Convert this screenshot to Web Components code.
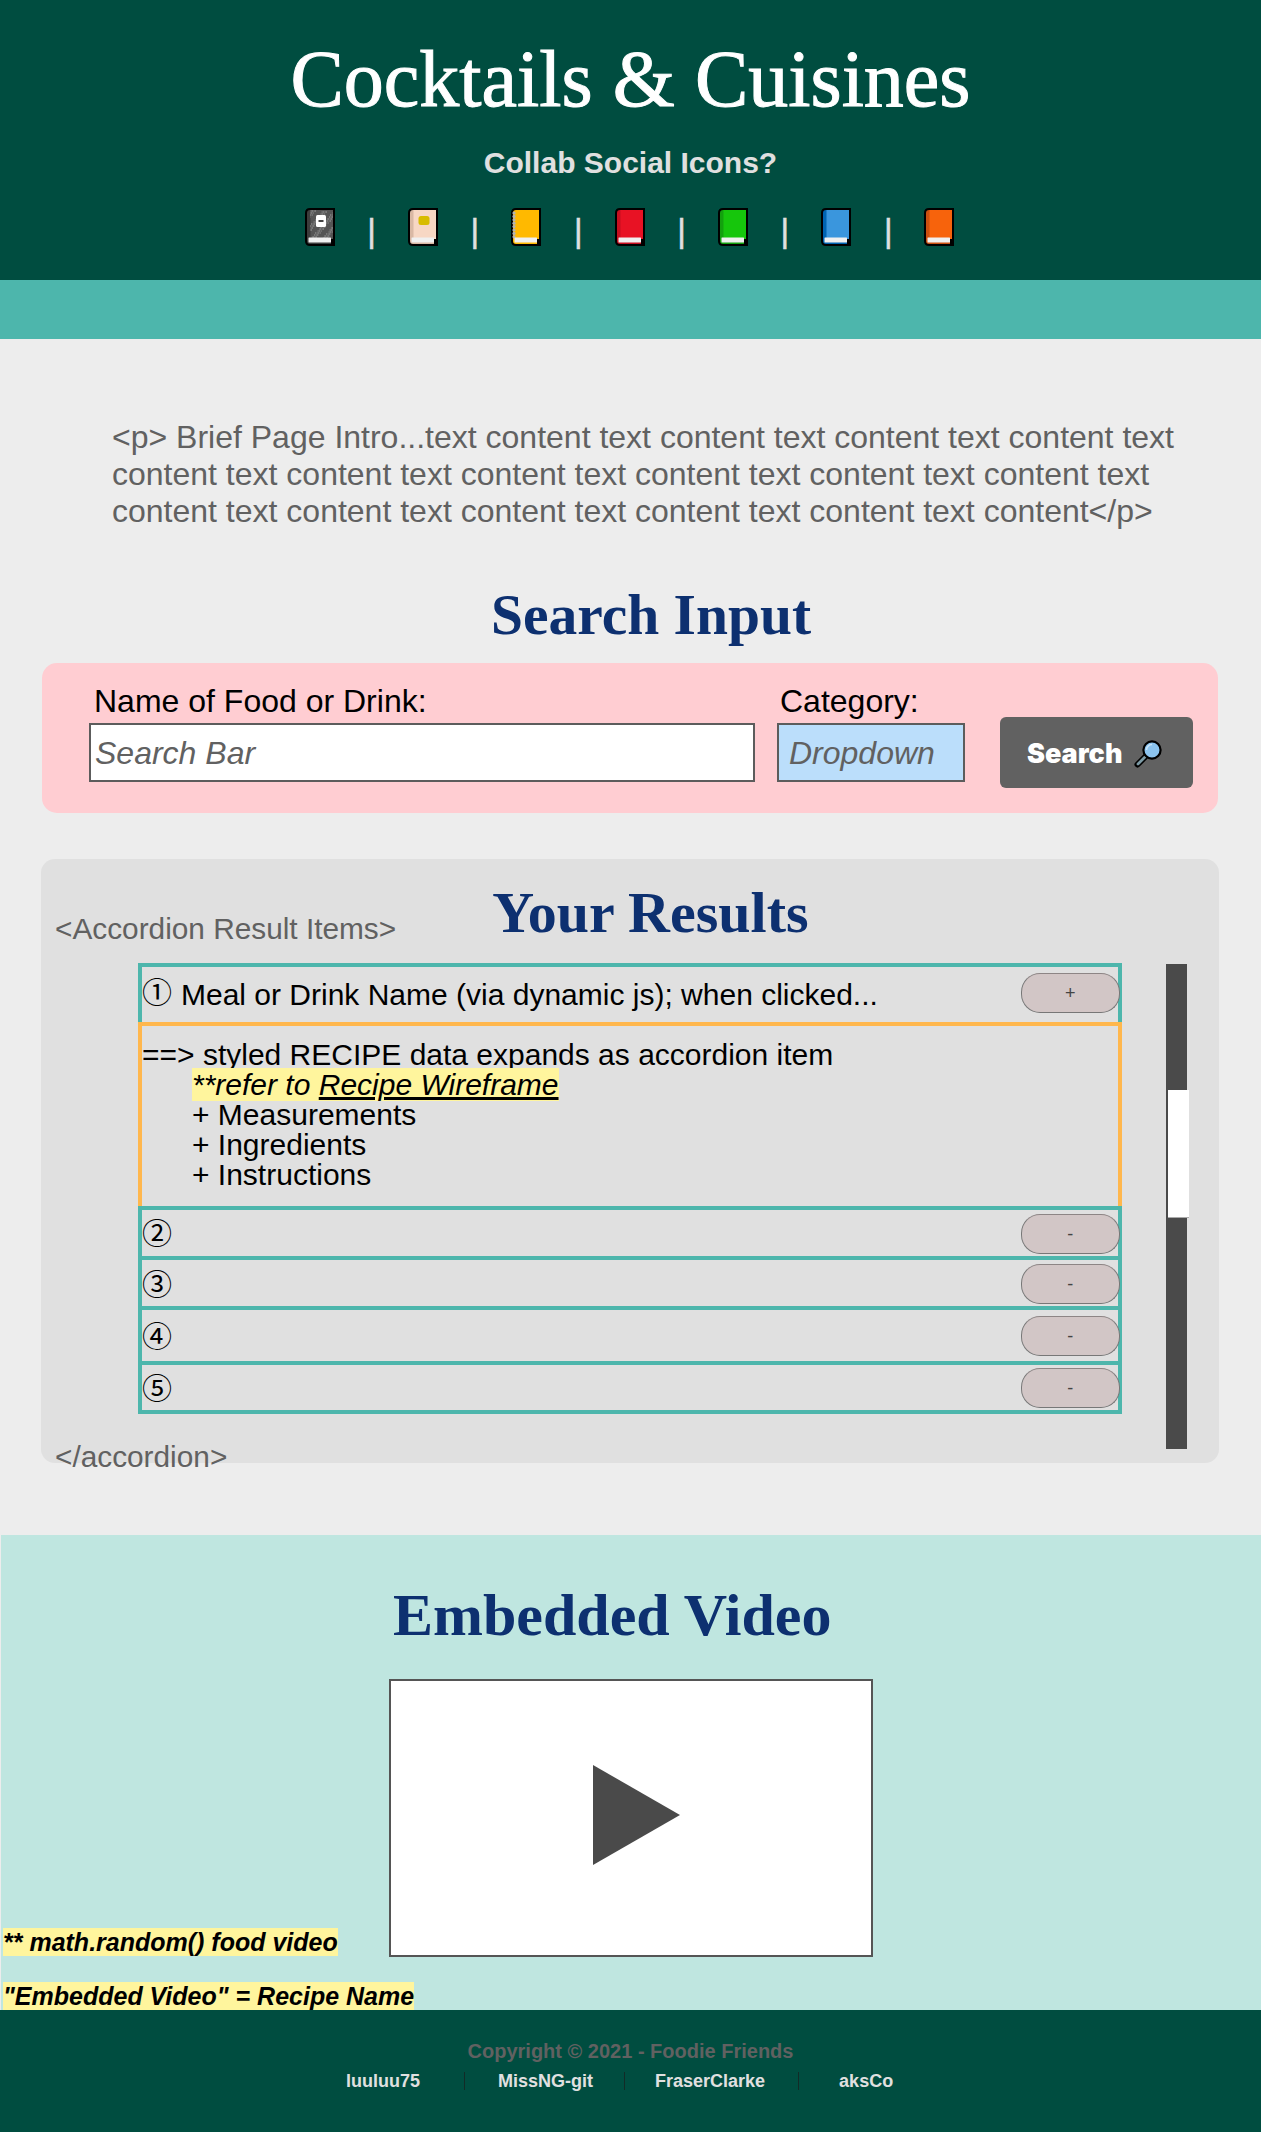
<!DOCTYPE html>
<html lang="en">
<head>
<meta charset="utf-8">
<title>Cocktails &amp; Cuisines</title>
<style>
    html, body { margin: 0; padding: 0; background: #ededed; }
    body { font-family: "Liberation Sans", Arial, sans-serif; }
</style>
</head>
<body>
<site-header></site-header>
<page-intro>&lt;p&gt; Brief Page Intro...text content text content text content text content text content text content text content text content text content text content text content text content text content text content text content text content&lt;/p&gt;</page-intro>
<section-title style="--left:491px;--top:50px">Search Input</section-title>
<search-panel></search-panel>
<results-panel>
    <accordion-row num="①" label="Meal or Drink Name (via dynamic js); when clicked..." sign="+" first open style="--row:55px;--pad:6px;--num:0px"></accordion-row>
    <recipe-detail></recipe-detail>
    <accordion-row num="②" sign="-" first style="--row:46px;--pad:4px;--num:-2px"></accordion-row>
    <accordion-row num="③" sign="-" style="--row:46px;--pad:4px;--num:-1px"></accordion-row>
    <accordion-row num="④" sign="-" style="--row:51px;--pad:6px;--num:1px"></accordion-row>
    <accordion-row num="⑤" sign="-" style="--row:45px;--pad:3px;--num:-2px"></accordion-row>
</results-panel>
<video-section></video-section>
<site-footer></site-footer>

<script>
// emoji style books, drawn by hand
const books = [
    { cover: '#555555', spine: '#3c3c3c', kind: 'speckle' },
    { cover: '#f7d7c4', spine: '#d9b8a4', kind: 'tag' },
    { cover: '#ffb900', spine: '#ffb900', kind: 'spiral' },
    { cover: '#e81224', spine: '#c50f1f' },
    { cover: '#16c60c', spine: '#13a10e' },
    { cover: '#3a96dd', spine: '#0063b1' },
    { cover: '#f7630c', spine: '#ca5010' }
];

class BookIcon extends HTMLElement {
    connectedCallback() {
        const book = books[Number(this.getAttribute('index'))];
        let extra = '';

        if (book.kind === 'speckle') {
            // pale dots on the cover
            for (let i = 0; i < 150; i++) {
                const x = 5 + (i * 37) % 23;
                const y = 2.5 + (i * 53) % 28;
                extra += `<rect x="${x}" y="${y}" width="1" height="1" fill="#a8a8a8" opacity="${0.35 + (i % 3) * 0.25}"/>`;
            }
            extra += '<rect x="11" y="7" width="10" height="12" rx="1.5" fill="#fff"/><rect x="13.5" y="12" width="5" height="2" fill="#444"/>';
        }
        if (book.kind === 'tag') {
            extra = '<rect x="10.5" y="8" width="11" height="9" rx="2.5" fill="#d8bc00"/>';
        }
        if (book.kind === 'spiral') {
            for (let y = 5; y < 30; y += 3.4) {
                extra += `<circle cx="3" cy="${y}" r="1.6" fill="#b4b4b4"/>`;
            }
        }

        const shadow = this.attachShadow({ mode: 'open' });
        shadow.innerHTML = /* html */ `
        <style>
            :host { display: block; width: 30px; height: 38px; flex: none; }
            svg { display: block; }
        </style>
        <svg width="30" height="38" viewBox="0 0 30 38">
            <path d="M5 0H30V38H5Q0 38 0 33V5Q0 0 5 0Z" fill="#000"/>
            <path d="M5 2H28V31H26V36H5Q2 36 2 33V5Q2 2 5 2Z" fill="${book.spine}"/>
            <path d="M5.5 2H28V31H5.5Z" fill="${book.cover}"/>
            ${extra}
            <rect x="3.5" y="29.5" width="22.5" height="5" rx="0.5" fill="#f0f0f0"/>
        </svg>
        `;
    }
}
customElements.define('book-icon', BookIcon);

class SiteHeader extends HTMLElement {
    constructor() {
        super();
        const shadow = this.attachShadow({ mode: 'open' });
        shadow.innerHTML = /* html */ `
        <style>
            :host { display: block; }
            .top {
                background: #004d40;
                padding: 39px 0 34px;
                text-align: center;
            }
            h1 {
                margin: 0;
                font: 400 80px/80px "Liberation Serif", "Times New Roman", serif;
                color: #fff;
                -webkit-text-stroke: 1px #fff;
            }
            p {
                margin: 27px 0 0;
                font: 700 30px/34px "Liberation Sans", Arial, sans-serif;
                color: #e0e0e0;
            }
            .icons {
                display: flex;
                justify-content: center;
                margin: 28px 2px 0 0;
                height: 38px;
            }
            .sep {
                width: 4px;
                margin: 0 34.33px 0 35px;
                display: flex;
                justify-content: center;
                font: 400 33px/46px "Liberation Sans", Arial, sans-serif;
                color: #e0e0e0;
                -webkit-text-stroke: 0.5px #e0e0e0;
            }
            .band { height: 59px; background: #4db6ac; }
        </style>
        <div class="top">
            <h1>Cocktails &amp; Cuisines</h1>
            <p>Collab Social Icons?</p>
            <div class="icons"></div>
        </div>
        <div class="band"></div>
        `;

        const icons = shadow.querySelector('.icons');
        books.forEach((book, i) => {
            const icon = document.createElement('book-icon');
            icon.setAttribute('index', i);
            icons.appendChild(icon);
            if (i < books.length - 1) {
                const sep = document.createElement('span');
                sep.classList.add('sep');
                sep.textContent = '|';
                icons.appendChild(sep);
            }
        });
    }
}
customElements.define('site-header', SiteHeader);

class PageIntro extends HTMLElement {
    constructor() {
        super();
        const shadow = this.attachShadow({ mode: 'open' });
        shadow.innerHTML = /* html */ `
        <style>
            :host {
                display: block;
                margin: 80px 0 0 112px;
                width: 1090px;
                font: 400 32px/37px "Liberation Sans", Arial, sans-serif;
                color: #616161;
            }
        </style>
        <slot></slot>
        `;
    }
}
customElements.define('page-intro', PageIntro);

class SectionTitle extends HTMLElement {
    constructor() {
        super();
        const shadow = this.attachShadow({ mode: 'open' });
        shadow.innerHTML = /* html */ `
        <style>
            :host {
                display: block;
                margin: var(--top, 0) 0 0 var(--left, 0);
                font: 700 var(--size, 57.5px)/70px "Liberation Serif", "Times New Roman", serif;
                color: #0d3070;
                white-space: nowrap;
            }
        </style>
        <slot></slot>
        `;
    }
}
customElements.define('section-title', SectionTitle);

class SearchPanel extends HTMLElement {
    constructor() {
        super();
        const shadow = this.attachShadow({ mode: 'open' });
        shadow.innerHTML = /* html */ `
        <style>
            :host {
                display: flex;
                align-items: flex-start;
                box-sizing: border-box;
                width: 1176px;
                height: 150px;
                margin: 13px 0 0 42px;
                padding: 20px 0 0 47px;
                background: #ffcdd2;
                border-radius: 15px;
                font: 400 32px/37px "Liberation Sans", Arial, sans-serif;
                color: #000;
            }
            .label { padding-left: 5px; white-space: nowrap; }
            .cat { padding-left: 3px; }
            .field {
                box-sizing: border-box;
                height: 59px;
                margin-top: 3px;
                border: 2.5px solid #5c5c5c;
                font-style: italic;
                color: #616161;
                line-height: 57px;
                padding-left: 4px;
            }
            .name .field { width: 666px; background: #fff; }
            .category { margin-left: 22px; }
            .category .field { width: 188px; background: #bbdefb; padding-left: 10px; }
            button {
                display: flex;
                align-items: center;
                box-sizing: border-box;
                width: 193px;
                height: 71px;
                margin: 34px 0 0 35px;
                padding: 2px 0 0 27px;
                border: 0;
                border-radius: 6px;
                background: #616161;
                color: #fff;
                font: 900 27px/28px Inter, "Liberation Sans", sans-serif;
            }
            svg { margin-left: 12px; display: block; }
        </style>
        <div class="name">
            <div class="label">Name of Food or Drink:</div>
            <div class="field">Search Bar</div>
        </div>
        <div class="category">
            <div class="label cat">Category:</div>
            <div class="field">Dropdown</div>
        </div>
        <button>Search
            <svg width="28" height="28" viewBox="0 0 28 28">
                <path d="M12 16L3.5 24.5" stroke="#000" stroke-width="6" stroke-linecap="round"/>
                <path d="M11 17L4 24" stroke="#7c9aa5" stroke-width="2.8" stroke-linecap="round"/>
                <circle cx="18" cy="10" r="8.6" fill="#8cc4ef" stroke="#000" stroke-width="2.2"/>
                <path d="M12.5 10A5.5 5.5 0 0 1 18 4.5" fill="none" stroke="#c9e4f8" stroke-width="1.6"/>
            </svg>
        </button>
        `;
    }
}
customElements.define('search-panel', SearchPanel);

class ResultsPanel extends HTMLElement {
    constructor() {
        super();
        const shadow = this.attachShadow({ mode: 'open' });
        shadow.innerHTML = /* html */ `
        <style>
            :host {
                display: block;
                box-sizing: border-box;
                width: 1178px;
                height: 604px;
                margin: 46px 0 0 41px;
                padding: 18px 0 0 14px;
                background: #e0e0e0;
                border-radius: 14px;
                font: 400 29.8px/37px "Liberation Sans", Arial, sans-serif;
                color: #616161;
            }
            .head { display: flex; align-items: flex-end; height: 70px; }
            section-title { margin: 1px 0 -1px 96px; --size: 58px; }
            .body { display: flex; align-items: flex-start; margin: 16px 0 0 83px; }
            .list { width: 984px; }
            .scroll {
                box-sizing: border-box;
                width: 21px;
                height: 485px;
                margin: 1px 0 0 44px;
                padding-top: 126px;
                background: #4a4a4a;
            }
            .thumb {
                box-sizing: border-box;
                width: 21px;
                height: 128px;
                margin-left: 2px;
                background: #fff;
                border-bottom: 1px solid #aaa;
            }
            .close { margin-top: -11px; }
        </style>
        <div class="head">
            <span>&lt;Accordion Result Items&gt;</span>
            <section-title>Your Results</section-title>
        </div>
        <div class="body">
            <div class="list"><slot></slot></div>
            <div class="scroll"><div class="thumb"></div></div>
        </div>
        <div class="close">&lt;/accordion&gt;</div>
        `;
    }
}
customElements.define('results-panel', ResultsPanel);

class AccordionRow extends HTMLElement {
    connectedCallback() {
        const shadow = this.attachShadow({ mode: 'open' });
        const num = this.getAttribute('num');
        const label = this.getAttribute('label') || '';
        const sign = this.getAttribute('sign');

        shadow.innerHTML = /* html */ `
        <style>
            :host {
                display: flex;
                justify-content: space-between;
                align-items: flex-start;
                box-sizing: content-box;
                height: var(--row);
                border: 4px solid #4db6ac;
                border-top-width: ${this.hasAttribute('first') ? 4 : 0}px;
                border-bottom-width: ${this.hasAttribute('open') ? 0 : 4}px;
                font: 400 30px/37px "Liberation Sans", Arial, sans-serif;
                color: #000;
            }
            .text {
                display: flex;
                padding: 5px 0 0 0;
                margin-top: var(--num);
                white-space: nowrap;
            }
            .num {
                font-family: "Noto Sans CJK JP", "DejaVu Sans", sans-serif;
                width: 39px;
                font-size: 30px;
            }
            .label { padding-top: 4px; }
            button {
                box-sizing: border-box;
                flex: none;
                width: 99.5px;
                height: 40px;
                margin: var(--pad) -2px 0 0;
                padding: 0;
                border: 1.5px solid #777;
                border-top-color: #8d8585;
                border-radius: 19px;
                background: #d2c6c6;
                color: #444;
                font: 400 18px/20px "Liberation Sans", Arial, sans-serif;
            }
        </style>
        <div class="text"><span class="num">${num}</span><span class="label">${label}</span></div>
        <button>${sign}</button>
        `;
    }
}
customElements.define('accordion-row', AccordionRow);

class RecipeDetail extends HTMLElement {
    constructor() {
        super();
        const shadow = this.attachShadow({ mode: 'open' });
        shadow.innerHTML = /* html */ `
        <style>
            :host {
                display: block;
                box-sizing: border-box;
                height: 184px;
                padding: 14px 0 0 0;
                border: 4px solid #ffb74d;
                border-bottom: 0;
                font: 400 30px/30px "Liberation Sans", Arial, sans-serif;
                color: #000;
            }
            .in { padding-left: 50px; }
            em { background: #fff59d; }
            u { text-decoration-thickness: 2.5px; }
        </style>
        <div>==&gt; styled RECIPE data expands as accordion item</div>
        <div class="in"><em>**refer to <u>Recipe Wireframe</u></em></div>
        <div class="in">+ Measurements</div>
        <div class="in">+ Ingredients</div>
        <div class="in">+ Instructions</div>
        `;
    }
}
customElements.define('recipe-detail', RecipeDetail);

class VideoSection extends HTMLElement {
    constructor() {
        super();
        const shadow = this.attachShadow({ mode: 'open' });
        shadow.innerHTML = /* html */ `
        <style>
            :host {
                display: block;
                height: 475px;
                box-sizing: border-box;
                margin: 72px 0 0 1px;
                padding-top: 45px;
                background: #bfe6e0;
            }
            section-title { --size: 60px; }
            .row {
                display: grid;
                grid-template-columns: 388px 484px;
                margin-top: 29px;
            }
            .note {
                font: italic 700 25px/28px "Liberation Sans", Arial, sans-serif;
                color: #000;
                padding-left: 2px;
                white-space: nowrap;
            }
            .note span { background: #fff59d; }
            .row .note { align-self: end; margin-bottom: 1px; }
            .video {
                display: flex;
                align-items: center;
                justify-content: center;
                box-sizing: border-box;
                height: 278px;
                background: #fff;
                border: 2px solid #555;
            }
            svg { display: block; margin: -6px 0 0 10px; }
            .last { margin-top: 25px; }
        </style>
        <section-title style="--left:392px">Embedded Video</section-title>
        <div class="row">
            <div class="note"><span>** math.random() food video</span></div>
            <div class="video">
                <svg width="87" height="100" viewBox="0 0 87 100"><path d="M0 0L87 50L0 100Z" fill="#4a4a4a"/></svg>
            </div>
        </div>
        <div class="note last"><span>"Embedded Video" = Recipe Name</span></div>
        `;
    }
}
customElements.define('video-section', VideoSection);

const members = [
    { name: 'luuluu75', left: 0, right: 44 },
    { name: 'MissNG-git', left: 33, right: 31 },
    { name: 'FraserClarke', left: 30, right: 33 },
    { name: 'aksCo', left: 40, right: 0 }
];

class SiteFooter extends HTMLElement {
    constructor() {
        super();
        const shadow = this.attachShadow({ mode: 'open' });
        shadow.innerHTML = /* html */ `
        <style>
            :host {
                display: block;
                box-sizing: border-box;
                height: 122px;
                padding-top: 29px;
                background: #004d40;
                font-family: "Liberation Sans", Arial, sans-serif;
                font-weight: 700;
            }
            .copy { text-align: center; font-size: 20px; line-height: 24px; color: #616161; }
            .names { display: flex; margin: 9px 0 0 346px; }
            .names span {
                font-size: 18px;
                line-height: 18px;
                color: #e0e0e0;
                border-right: 1px solid #122b27;
                white-space: nowrap;
            }
            .names span:last-child { border-right: 0; }
        </style>
        <div class="copy">Copyright © 2021 - Foodie Friends</div>
        <div class="names"></div>
        `;

        const names = shadow.querySelector('.names');
        for (let i = 0; i < members.length; i++) {
            const element = document.createElement('span');
            element.textContent = members[i].name;
            element.style.paddingLeft = members[i].left + 'px';
            element.style.paddingRight = members[i].right + 'px';
            names.appendChild(element);
        }
    }
}
customElements.define('site-footer', SiteFooter);
</script>
</body>
</html>
